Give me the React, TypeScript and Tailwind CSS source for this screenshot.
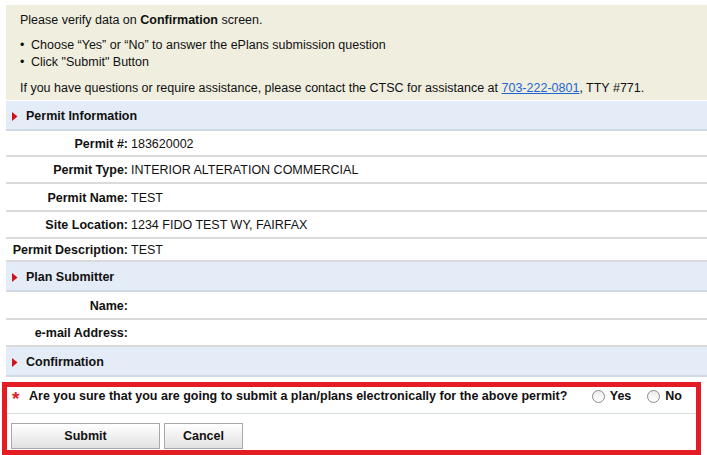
import React from "react";

const font = { fontFamily: '"Liberation Sans", Arial, sans-serif' };

function Arrow() {
  return (
    <svg width="6" height="9" viewBox="0 0 6 9" className="shrink-0">
      <polygon points="0,0 5.5,4.5 0,9" fill="#d0121b" />
    </svg>
  );
}

function Header({ title }: { title: string }) {
  return (
    <div className="flex h-[30px] items-center gap-[8px] border-b-2 border-[#cfd8e3] bg-[#e4ecf7] pl-[6px] pt-[2px] font-bold">
      <Arrow />
      <span>{title}</span>
    </div>
  );
}

function Row({ label, value, h }: { label: string; value?: string; h: string }) {
  return (
    <div className={`flex items-center border-b-2 border-[#dadada] bg-white pt-[2px] ${h}`}>
      <div className="w-[122px] shrink-0 whitespace-nowrap text-right font-bold">{label}</div>
      <div className="pl-[3px]">{value}</div>
    </div>
  );
}

function Radio({ label }: { label: string }) {
  return (
    <div className="flex items-center gap-[5px]">
      <span className="inline-block h-[13px] w-[13px] rounded-full border border-[#8a8a8a] bg-gradient-to-b from-[#ececec] to-white" />
      <span className="font-bold">{label}</span>
    </div>
  );
}

export default function App() {
  return (
    <div style={font} className="h-[455px] w-[707px] overflow-hidden bg-white pt-[5px] text-[12.5px] leading-[17px] text-[#111]">
      <div className="ml-[6px]">
        <div className="bg-[#efeedf] pl-[14px] pt-[7px] pb-[3px]">
          <p className="h-[17px]">
            Please verify data on <b>Confirmation</b> screen.
          </p>
          <ul className="mt-[8px]">
            <li className="flex h-[17px]">
              <span className="w-[11px]">•</span>Choose “Yes” or “No” to answer the ePlans submission question
            </li>
            <li className="flex h-[17px]">
              <span className="w-[11px]">•</span>Click "Submit" Button
            </li>
          </ul>
          <p className="mt-[9px] h-[17px]">
            If you have questions or require assistance, please contact the CTSC for assistance at{" "}
            <span className="text-[#1f64d0] underline">703-222-0801</span>, TTY #771.
          </p>
        </div>
        <div className="mt-[1px]">
          <Header title="Permit Information" />
          <Row label="Permit #:" value="183620002" h="h-[26px]" />
          <Row label="Permit Type:" value="INTERIOR ALTERATION COMMERCIAL" h="h-[27px]" />
          <Row label="Permit Name:" value="TEST" h="h-[28px]" />
          <Row label="Site Location:" value="1234 FIDO TEST WY, FAIRFAX" h="h-[27px]" />
          <Row label="Permit Description:" value="TEST" h="h-[23px]" />
          <Header title="Plan Submitter" />
          <Row label="Name:" h="h-[28px]" />
          <Row label="e-mail Address:" h="h-[27px]" />
          <Header title="Confirmation" />
        </div>
      </div>
      <div className="ml-[2px] mt-[5px] h-[73px] w-[699px] border-[5px] border-[#e41c24]">
        <div className="flex h-[27px] items-start border-b border-[#d6dee8] pl-[5px] pr-[14px] pt-[1px]">
          <span className="mr-[7px] w-[10px] translate-y-[3px] text-[19px] font-bold leading-[16px] text-[#e41c24]">*</span>
          <span className="font-bold">
            Are you sure that you are going to submit a plan/plans electronically for the above permit?
          </span>
          <div className="ml-auto flex h-[17px] items-center gap-[16px]">
            <Radio label="Yes" />
            <Radio label="No" />
          </div>
        </div>
        <div className="flex gap-[4px] pt-[9px] pl-[4px]">
          <button className="h-[26px] w-[149px] border border-[#a8a8a8] bg-gradient-to-b from-white to-[#e2e2e2] font-bold">
            Submit
          </button>
          <button className="h-[26px] w-[79px] border border-[#a8a8a8] bg-gradient-to-b from-white to-[#e2e2e2] font-bold">
            Cancel
          </button>
        </div>
      </div>
    </div>
  );
}
